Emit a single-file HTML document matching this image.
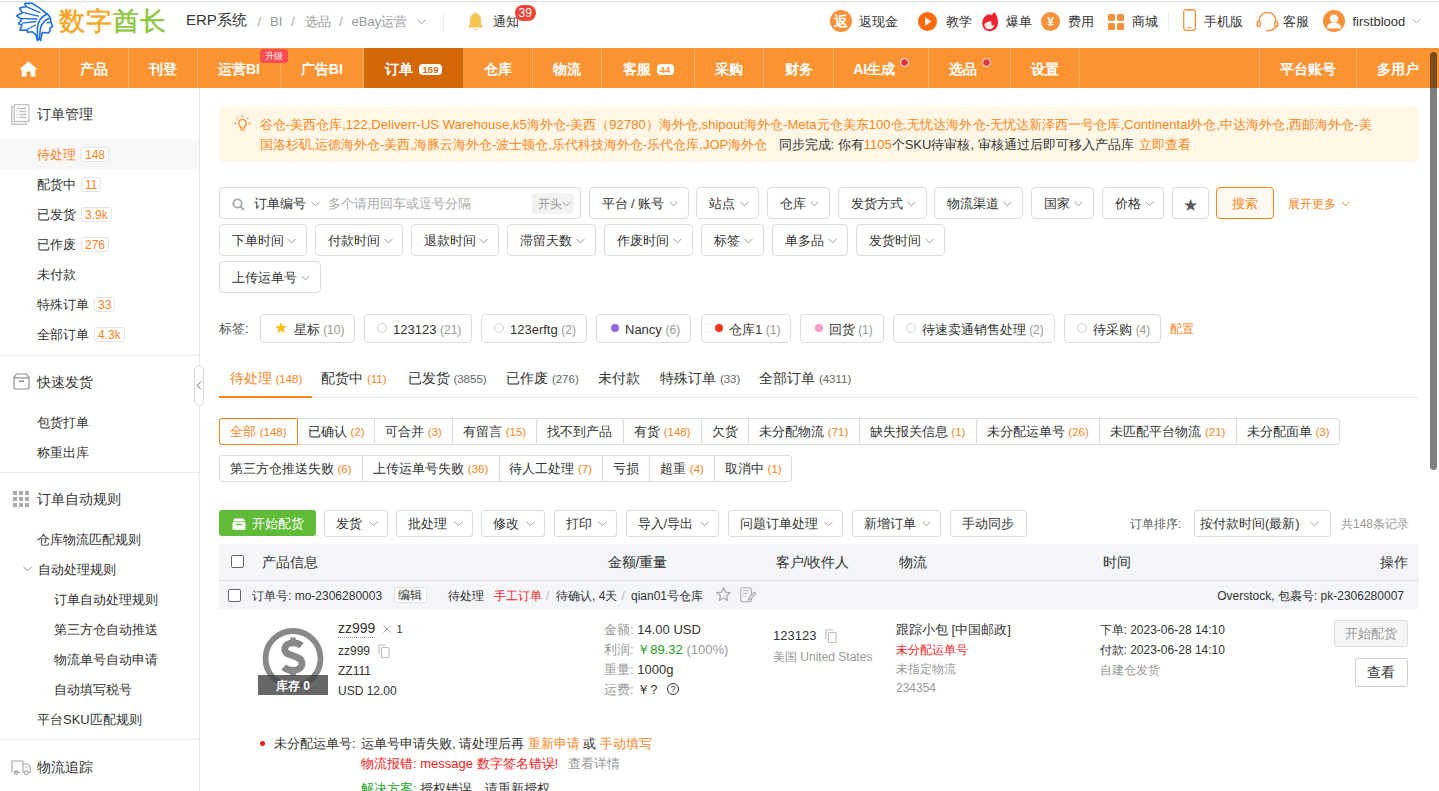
<!DOCTYPE html>
<html><head><meta charset="utf-8"><title>订单</title>
<style>
*{box-sizing:border-box;margin:0;padding:0}
html,body{width:1439px;height:791px;overflow:hidden;background:#fff;font-family:"Liberation Sans",sans-serif;color:#333;font-size:13px}
.a{position:absolute;white-space:nowrap;line-height:20px}
.btn{position:absolute;border:1px solid #dcdcdc;border-radius:4px;background:#fff}
</style></head><body>

<div class="a" style="left:0px;top:0px;width:1439px;height:48px;background:#fff"></div>
<div class="a" style="left:0px;top:1px;width:1439px;height:1px;background:#dcdcdc"></div>
<svg class="a" style="left:12px;top:0px" width="46" height="44" viewBox="12 0 46 44">
<g fill="none" stroke="#1f6fd8" stroke-width="1.6" stroke-linejoin="round" stroke-linecap="round">
<path d="M24.8,3.4 L32.4,3.4 L40,8.4 L47.2,14 Q50.5,16 51,22.3 L52.5,26.5 L49.9,28.4 L50.3,30.3 L48.4,33 L42.3,32.5 L41.2,36.8 L40.8,40.5 L38.9,38.6 L37.4,40.5 L36.2,35.2 L32.4,31.8 L27.6,32.2 L27,30 L20,30.3 L22,25 L18.5,23.7 L21.8,19.2 L16.5,15.9 L22.3,12.8 L19.6,8.1 L26,6.4 Z"/>
<path d="M26.2,6.7 L40,12.6 M23.2,12.6 L38.5,16.2 M22,18.7 L37,19 M22.3,23.1 L35.7,21.5 M27,29.5 L35.5,25" stroke-width="1.3"/>
<path d="M47.2,14 Q38,18 37.4,28 L37.4,40 M48.8,18.6 Q40.5,22 40,32 L39.5,38 M47.2,22.7 L51,22.3"/>
</g></svg>
<div class="a" style="left:59px;top:4px;font-size:26px;line-height:34px;font-weight:normal;letter-spacing:1px;-webkit-text-stroke:0.5px currentColor"><span style="color:#f5a623">数字</span><span style="color:#8dc63f">酋长</span></div>
<div class="a" style="left:186px;top:10.0px;font-size:15px;color:#333;">ERP系统</div>
<div class="a" style="left:257.5px;top:12.0px;font-size:13px;color:#aaa;">/</div>
<div class="a" style="left:270px;top:12.0px;font-size:13px;color:#999;">BI</div>
<div class="a" style="left:291px;top:12.0px;font-size:13px;color:#aaa;">/</div>
<div class="a" style="left:304.5px;top:12.0px;font-size:13px;color:#999;">选品</div>
<div class="a" style="left:339px;top:12.0px;font-size:13px;color:#aaa;">/</div>
<div class="a" style="left:351.5px;top:12.0px;font-size:13px;color:#999;">eBay运营</div>
<div class="a" style="left:416.5px;top:18.5px;width:9px;height:6px;line-height:0"><svg width="9" height="6" viewBox="0 0 9 6"><path d="M0.5 0.8 L4.5 4.8 L8.5 0.8" fill="none" stroke="#999" stroke-width="1"/></svg></div>
<div class="a" style="left:443px;top:11px;width:1px;height:21px;background:#eee"></div>
<svg class="a" style="left:466px;top:12px" width="19" height="20" viewBox="0 0 19 20">
<path d="M9.5 1.5 C5.5 1.5 4 4.8 4 8 L4 12 L2 15.5 L17 15.5 L15 12 L15 8 C15 4.8 13.5 1.5 9.5 1.5 Z" fill="#f7c452"/>
<circle cx="9.5" cy="1.8" r="1.3" fill="#f7c452"/><path d="M7.5 17 Q9.5 19.5 11.5 17 Z" fill="#f7c452"/></svg>
<div class="a" style="left:492.5px;top:12.3px;font-size:13px;color:#333;">通知</div>
<div class="a" style="left:514.5px;top:4.5px;width:21.5px;height:16.0px;background:#ef4136;border-radius:8px"></div>
<div class="a" style="left:514.5px;top:4.5px;width:21.5px;height:16px;line-height:16px;font-size:12px;color:#fff;text-align:center">39</div>
<div class="a" style="left:830px;top:10px;width:22px;height:22px;border-radius:50%;background:#f8923a;color:#fff;font-size:14px;line-height:22px;text-align:center;font-weight:bold">返</div>
<div class="a" style="left:859px;top:11.5px;font-size:13px;color:#333;">返现金</div>
<svg class="a" style="left:918px;top:11.5px" width="19" height="19" viewBox="0 0 19 19"><circle cx="9.5" cy="9.5" r="9.5" fill="#fa6b0e"/><path d="M7.2 5.3 L13.2 9.5 L7.2 13.7 Z" fill="#fff"/></svg>
<div class="a" style="left:945.5px;top:11.5px;font-size:13px;color:#333;">教学</div>
<svg class="a" style="left:981px;top:11px" width="18" height="21" viewBox="0 0 18 21">
<path d="M13.4 0.9 C15.5 3 17 7 17 11.5 C17 16.5 13.5 20.2 9 20.2 C4.5 20.2 1.2 16.8 1.2 12.5 C1.2 8 4 4 9 3 L9.8 4.5 L11.4 3.2 Z" fill="#f2222e"/>
<path d="M3.4 13.2 C4.3 11.8 6 11 10.2 10 C10.2 11.5 10.4 13 10.8 14.2 L13.4 14.2 C12.8 16.5 11 18.2 8 18.2 C5.5 18.2 3.6 16.5 3.4 13.2 Z" fill="#fdeeee"/></svg>
<div class="a" style="left:1005.5px;top:11.5px;font-size:13px;color:#333;">爆单</div>
<div class="a" style="left:1041px;top:11.5px;width:19px;height:19px;border-radius:50%;background:#f8923a;color:#fff;font-size:12px;line-height:21px;text-align:center;font-weight:bold">¥</div>
<div class="a" style="left:1068px;top:11.5px;font-size:13px;color:#333;">费用</div>
<svg class="a" style="left:1108px;top:14px" width="16" height="16" viewBox="0 0 16 16" fill="#f8923a"><rect x="0" y="0" width="7" height="7" rx="1.5"/><rect x="9" y="0" width="7" height="7" rx="1.5"/><rect x="0" y="9" width="7" height="7" rx="1.5"/><rect x="9" y="9" width="7" height="7" rx="1.5"/></svg>
<div class="a" style="left:1132px;top:11.5px;font-size:13px;color:#333;">商城</div>
<div class="a" style="left:1168px;top:11px;width:1px;height:21px;background:#eee"></div>
<svg class="a" style="left:1183px;top:9px" width="13" height="22" viewBox="0 0 13 22"><rect x="0.7" y="0.7" width="11.6" height="20.6" rx="2.2" fill="none" stroke="#f8913a" stroke-width="1.3"/><path d="M4.5 18.6 L8.5 18.6" stroke="#f8913a" stroke-width="1"/><path d="M4.5 1.2 L8.5 1.2" stroke="#f8913a" stroke-width="1"/></svg>
<div class="a" style="left:1204px;top:11.5px;font-size:13px;color:#333;">手机版</div>
<svg class="a" style="left:1256px;top:11px" width="23" height="21" viewBox="0 0 23 21" fill="none" stroke="#f8913a" stroke-width="1.4">
<path d="M3.2 11 L3.2 9.5 C3.2 4.8 6.9 1.4 11.5 1.4 C16.1 1.4 19.8 4.8 19.8 9.5 L19.8 11"/>
<rect x="1.2" y="10.5" width="3" height="5" rx="1.5"/><rect x="18.8" y="10.5" width="3" height="5" rx="1.5"/>
<path d="M19.8 15.5 C19.3 17.8 16.5 19.2 12.5 19.6"/><circle cx="11.5" cy="19.6" r="1.2" fill="#f8913a" stroke="none"/></svg>
<div class="a" style="left:1282.5px;top:11.5px;font-size:13px;color:#333;">客服</div>
<svg class="a" style="left:1323px;top:10px" width="22" height="22" viewBox="0 0 22 22"><circle cx="11" cy="11" r="11" fill="#f8913a"/>
<circle cx="11" cy="8.6" r="4.2" fill="#fff"/><path d="M3.8 17.2 C4.5 14.2 7.5 12.8 11 12.8 C14.5 12.8 17.5 14.2 18.2 17.2 C18.2 18 17.5 18.4 16.8 18.4 L5.2 18.4 C4.5 18.4 3.8 18 3.8 17.2 Z" fill="#fff"/></svg>
<div class="a" style="left:1352.5px;top:11.5px;font-size:13px;color:#333;">firstblood</div>
<div class="a" style="left:1411.5px;top:18px;width:9px;height:6px;line-height:0"><svg width="9" height="6" viewBox="0 0 9 6"><path d="M0.5 0.8 L4.5 4.8 L8.5 0.8" fill="none" stroke="#aaa" stroke-width="1"/></svg></div>
<div class="a" style="left:0px;top:48px;width:1439px;height:40px;background:#fa9433"></div>
<div class="a" style="left:363.5px;top:48px;width:100.0px;height:40px;background:#d3680b"></div>
<div class="a" style="left:59px;top:48px;width:1px;height:40px;background:rgba(255,255,255,0.28)"></div>
<div class="a" style="left:128px;top:48px;width:1px;height:40px;background:rgba(255,255,255,0.28)"></div>
<div class="a" style="left:197px;top:48px;width:1px;height:40px;background:rgba(255,255,255,0.28)"></div>
<div class="a" style="left:280px;top:48px;width:1px;height:40px;background:rgba(255,255,255,0.28)"></div>
<div class="a" style="left:363px;top:48px;width:1px;height:40px;background:rgba(255,255,255,0.28)"></div>
<div class="a" style="left:463px;top:48px;width:1px;height:40px;background:rgba(255,255,255,0.28)"></div>
<div class="a" style="left:532px;top:48px;width:1px;height:40px;background:rgba(255,255,255,0.28)"></div>
<div class="a" style="left:601px;top:48px;width:1px;height:40px;background:rgba(255,255,255,0.28)"></div>
<div class="a" style="left:694px;top:48px;width:1px;height:40px;background:rgba(255,255,255,0.28)"></div>
<div class="a" style="left:763px;top:48px;width:1px;height:40px;background:rgba(255,255,255,0.28)"></div>
<div class="a" style="left:833px;top:48px;width:1px;height:40px;background:rgba(255,255,255,0.28)"></div>
<div class="a" style="left:928px;top:48px;width:1px;height:40px;background:rgba(255,255,255,0.28)"></div>
<div class="a" style="left:1010px;top:48px;width:1px;height:40px;background:rgba(255,255,255,0.28)"></div>
<div class="a" style="left:1079px;top:48px;width:1px;height:40px;background:rgba(255,255,255,0.28)"></div>
<div class="a" style="left:1259px;top:48px;width:1px;height:40px;background:rgba(255,255,255,0.28)"></div>
<div class="a" style="left:1356px;top:48px;width:1px;height:40px;background:rgba(255,255,255,0.28)"></div>
<svg class="a" style="left:19px;top:61px" width="19" height="16" viewBox="0 0 19 16"><path d="M9.5 0.5 L18.5 8.2 L16.3 8.2 L16.3 15.5 L11.5 15.5 L11.5 10.5 L7.5 10.5 L7.5 15.5 L2.7 15.5 L2.7 8.2 L0.5 8.2 Z" fill="#fff"/></svg>
<div class="a" style="left:59.5px;top:59px;width:68.80000000000001px;text-align:center;font-size:14px;font-weight:bold;color:#fff;line-height:20px">产品</div>
<div class="a" style="left:128.3px;top:59px;width:69.39999999999998px;text-align:center;font-size:14px;font-weight:bold;color:#fff;line-height:20px">刊登</div>
<div class="a" style="left:197.7px;top:59px;width:82.5px;text-align:center;font-size:14px;font-weight:bold;color:#fff;line-height:20px">运营BI</div>
<div class="a" style="left:280.2px;top:59px;width:83.30000000000001px;text-align:center;font-size:14px;font-weight:bold;color:#fff;line-height:20px">广告BI</div>
<div class="a" style="left:363.5px;top:59px;width:100.0px;text-align:center;font-size:14px;font-weight:bold;color:#fff;line-height:20px">订单<span style="display:inline-block;margin-left:6px;width:23px;height:11px;border-radius:4px;background:#fff;color:#d3680b;font-size:9.5px;line-height:12px;vertical-align:1px">159</span></div>
<div class="a" style="left:463.5px;top:59px;width:68.79999999999995px;text-align:center;font-size:14px;font-weight:bold;color:#fff;line-height:20px">仓库</div>
<div class="a" style="left:532.3px;top:59px;width:69.0px;text-align:center;font-size:14px;font-weight:bold;color:#fff;line-height:20px">物流</div>
<div class="a" style="left:601.3px;top:59px;width:93.5px;text-align:center;font-size:14px;font-weight:bold;color:#fff;line-height:20px">客服<span style="display:inline-block;margin-left:6px;width:17px;height:11px;border-radius:4px;background:#fff;color:#fa9433;font-size:9.5px;line-height:12px;vertical-align:1px">44</span></div>
<div class="a" style="left:694.8px;top:59px;width:69.10000000000002px;text-align:center;font-size:14px;font-weight:bold;color:#fff;line-height:20px">采购</div>
<div class="a" style="left:763.9px;top:59px;width:69.30000000000007px;text-align:center;font-size:14px;font-weight:bold;color:#fff;line-height:20px">财务</div>
<div class="a" style="left:833.2px;top:59px;width:95.09999999999991px;text-align:center;font-size:14px;font-weight:bold;color:#fff;line-height:20px">AI生成<span style="display:inline-block;width:13px"></span></div>
<div class="a" style="left:928.3px;top:59px;width:82.0px;text-align:center;font-size:14px;font-weight:bold;color:#fff;line-height:20px">选品<span style="display:inline-block;width:13px"></span></div>
<div class="a" style="left:1010.3px;top:59px;width:69.40000000000009px;text-align:center;font-size:14px;font-weight:bold;color:#fff;line-height:20px">设置</div>
<div class="a" style="left:1259.5px;top:59px;width:96.5px;text-align:center;font-size:14px;font-weight:bold;color:#fff;line-height:20px">平台账号</div>
<div class="a" style="left:1356px;top:59px;width:83px;text-align:center;font-size:14px;font-weight:bold;color:#fff;line-height:20px">多用户</div>
<div class="a" style="left:260px;top:49px;width:28px;height:14px;border-radius:3px;background:#fd4b52;color:#fff;font-size:9px;line-height:14px;text-align:center">升级</div>
<div class="a" style="left:899.5px;top:58.3px;width:9px;height:9px;border-radius:50%;background:#e8323c;border:1.2px solid #fff"></div>
<div class="a" style="left:981.5px;top:58.3px;width:9px;height:9px;border-radius:50%;background:#e8323c;border:1.2px solid #fff"></div>
<div class="a" style="left:199px;top:88px;width:1px;height:703px;background:#e6e6e6"></div>
<svg class="a" style="left:11px;top:104px" width="19" height="21" viewBox="0 0 19 21" fill="none" stroke="#c2c2c2" stroke-width="1.2">
<rect x="0.6" y="2.6" width="14.3" height="17.8" fill="#f1f1f1"/><rect x="3.4" y="0.6" width="14.6" height="16.8" fill="#fff"/>
<path d="M6.2 4.5 L15.3 4.5" stroke-width="1.6"/><path d="M5.3 7.5 L6.3 7.5 M5.3 10.5 L6.3 10.5 M5.3 13.5 L6.3 13.5 M8.3 7.5 L15.3 7.5 M8.3 10.5 L15.3 10.5 M8.3 13.5 L15.3 13.5" stroke-width="1.3"/></svg>
<div class="a" style="left:37px;top:104px;font-size:14px;color:#333;">订单管理</div>
<div class="a" style="left:0px;top:139px;width:199px;height:30px;background:#f7f7f7"></div>
<div class="a" style="left:37px;top:144.5px;font-size:13px;color:#f7841f;">待处理</div>
<div class="a" style="left:81px;top:146.5px;height:15px;line-height:14px;padding:0 3px;border:1px solid #e4e4e4;border-radius:3px;font-size:12px;color:#f7841f;background:#fff">148</div>
<div class="a" style="left:37px;top:174.5px;font-size:13px;color:#333;">配货中</div>
<div class="a" style="left:81px;top:176.5px;height:15px;line-height:14px;padding:0 3px;border:1px solid #e4e4e4;border-radius:3px;font-size:12px;color:#f7841f;background:#fff">11</div>
<div class="a" style="left:37px;top:204.5px;font-size:13px;color:#333;">已发货</div>
<div class="a" style="left:81px;top:206.5px;height:15px;line-height:14px;padding:0 3px;border:1px solid #e4e4e4;border-radius:3px;font-size:12px;color:#f7841f;background:#fff">3.9k</div>
<div class="a" style="left:37px;top:234.5px;font-size:13px;color:#333;">已作废</div>
<div class="a" style="left:81px;top:236.5px;height:15px;line-height:14px;padding:0 3px;border:1px solid #e4e4e4;border-radius:3px;font-size:12px;color:#f7841f;background:#fff">276</div>
<div class="a" style="left:37px;top:264.5px;font-size:13px;color:#333;">未付款</div>
<div class="a" style="left:37px;top:294.5px;font-size:13px;color:#333;">特殊订单</div>
<div class="a" style="left:94px;top:296.5px;height:15px;line-height:14px;padding:0 3px;border:1px solid #e4e4e4;border-radius:3px;font-size:12px;color:#f7841f;background:#fff">33</div>
<div class="a" style="left:37px;top:324.5px;font-size:13px;color:#333;">全部订单</div>
<div class="a" style="left:94px;top:326.5px;height:15px;line-height:14px;padding:0 3px;border:1px solid #e4e4e4;border-radius:3px;font-size:12px;color:#f7841f;background:#fff">4.3k</div>
<div class="a" style="left:0px;top:355px;width:199px;height:1px;background:#ececec"></div>
<svg class="a" style="left:12.5px;top:373px" width="17" height="17" viewBox="0 0 17 17" fill="none" stroke="#8f8f8f" stroke-width="1.2">
<path d="M1 4.8 L1 14.6 Q1 16 2.4 16 L14.6 16 Q16 16 16 14.6 L16 4.8 Z"/><path d="M1 4.8 L3.4 1 L13.6 1 L16 4.8"/><path d="M6 8.2 L11 8.2" stroke-width="1.6"/></svg>
<div class="a" style="left:37px;top:372px;font-size:14px;color:#333;">快速发货</div>
<div class="a" style="left:37px;top:412.5px;font-size:13px;color:#333;">包货打单</div>
<div class="a" style="left:37px;top:442.5px;font-size:13px;color:#333;">称重出库</div>
<div class="a" style="left:194px;top:365px;width:10px;height:41px;border:1px solid #d8d8d8;border-radius:5px;background:#fff"></div>
<svg class="a" style="left:195.5px;top:381px" width="6" height="9" viewBox="0 0 6 9"><path d="M4.8 0.8 L1.2 4.5 L4.8 8.2" fill="none" stroke="#666" stroke-width="1"/></svg>
<div class="a" style="left:0px;top:472px;width:199px;height:1px;background:#ececec"></div>
<svg class="a" style="left:11px;top:489px" width="20" height="20" viewBox="0 0 20 20" fill="#acacac">
<rect x="0" y="0" width="20" height="20" fill="#fafafa"/>
<rect x="2" y="2" width="4" height="4"/><rect x="8" y="2" width="4" height="4"/><rect x="14" y="2" width="4" height="4"/>
<rect x="2" y="8" width="4" height="4"/><rect x="8" y="8" width="4" height="4"/><rect x="14" y="8" width="4" height="4"/>
<rect x="2" y="14" width="4" height="4"/><rect x="8" y="14" width="4" height="4"/><rect x="14" y="14" width="4" height="4"/></svg>
<div class="a" style="left:37px;top:489px;font-size:14px;color:#333;">订单自动规则</div>
<div class="a" style="left:37px;top:529.5px;font-size:13px;color:#333;">仓库物流匹配规则</div>
<svg class="a" style="left:22.5px;top:566px" width="9" height="6" viewBox="0 0 9 6"><path d="M0.5 0.8 L4.5 4.8 L8.5 0.8" fill="none" stroke="#888" stroke-width="1"/></svg>
<div class="a" style="left:38px;top:559.5px;font-size:13px;color:#333;">自动处理规则</div>
<div class="a" style="left:53.5px;top:589.5px;font-size:13px;color:#333;">订单自动处理规则</div>
<div class="a" style="left:53.5px;top:619.5px;font-size:13px;color:#333;">第三方仓自动推送</div>
<div class="a" style="left:53.5px;top:649.5px;font-size:13px;color:#333;">物流单号自动申请</div>
<div class="a" style="left:53.5px;top:679.5px;font-size:13px;color:#333;">自动填写税号</div>
<div class="a" style="left:37px;top:709.5px;font-size:13px;color:#333;">平台SKU匹配规则</div>
<div class="a" style="left:0px;top:739px;width:199px;height:1px;background:#ececec"></div>
<svg class="a" style="left:10.5px;top:759.5px" width="20" height="16" viewBox="0 0 20 16" fill="none" stroke="#a5a5a5" stroke-width="1.1">
<path d="M1 12.5 L1 1.5 Q1 1 1.5 1 L11.5 1 Q12 1 12 1.5 L12 12.5 M3 12.5 L9 12.5 M12 4 L16 4 Q17 4 18 5.5 L19.2 7.5 L19.2 12.5 L17.5 12.5 M12 12.5 L13.5 12.5"/>
<circle cx="5.2" cy="12.8" r="1.9"/><circle cx="15.3" cy="12.8" r="1.9"/><path d="M14 6 L16 6 L17 7.8 L14.5 7.8 Z" fill="#c8c8c8" stroke="none"/></svg>
<div class="a" style="left:37px;top:757px;font-size:14px;color:#333;">物流追踪</div>
<div class="a" style="left:219px;top:106px;width:1200px;height:56px;background:#fff7e6;border-radius:5px"></div>
<svg class="a" style="left:233.5px;top:114.5px" width="17" height="17" viewBox="0 0 17 17" fill="none" stroke="#f7861c" stroke-width="1.2">
<path d="M8.5 4.5 C6.2 4.5 4.7 6.2 4.7 8.2 C4.7 9.8 5.6 10.6 6.3 11.4 L6.3 13 L10.7 13 L10.7 11.4 C11.4 10.6 12.3 9.8 12.3 8.2 C12.3 6.2 10.8 4.5 8.5 4.5 Z"/>
<path d="M6.5 14.8 L10.5 14.8 M8.5 0.5 L8.5 2.3 M2.6 2.8 L3.8 4 M14.4 2.8 L13.2 4 M0.5 8.3 L2.3 8.3 M14.7 8.3 L16.5 8.3"/></svg>
<div class="a" style="left:259.5px;top:114.5px;font-size:13px;color:#f7861c;letter-spacing:0.05px;">谷仓-美西仓库,122,Deliverr-US Warehouse,k5海外仓-美西（92780）海外仓,shipout海外仓-Meta元仓美东100仓,无忧达海外仓-无忧达新泽西一号仓库,Continental外仓,中达海外仓,西邮海外仓-美</div>
<div class="a" style="left:259.5px;top:134.5px;font-size:13px;color:#f7861c;">国洛杉矶,运德海外仓-美西,海豚云海外仓-波士顿仓,乐代科技海外仓-乐代仓库,JOP海外仓</div>
<div class="a" style="left:778.5px;top:134.5px;font-size:13px;color:#333;">同步完成: 你有<span style="color:#f7861c">1105</span>个SKU待审核, 审核通过后即可移入产品库</div>
<div class="a" style="left:1138.5px;top:134.5px;font-size:13px;color:#f7861c;">立即查看</div>
<div class="btn" style="left:219px;top:187px;width:361.5px;height:32px"></div>
<svg class="a" style="left:231.5px;top:197.5px" width="13" height="13" viewBox="0 0 13 13" fill="none" stroke="#a6a6a6" stroke-width="1.8"><circle cx="5.5" cy="5.5" r="4.2"/><path d="M8.6 8.6 L12 12"/></svg>
<div class="a" style="left:254px;top:193.5px;font-size:13px;color:#333;">订单编号</div>
<div class="a" style="left:311px;top:200.5px;width:9px;height:6px;line-height:0"><svg width="9" height="6" viewBox="0 0 9 6"><path d="M0.5 0.8 L4.5 4.8 L8.5 0.8" fill="none" stroke="#999" stroke-width="1"/></svg></div>
<div class="a" style="left:328px;top:193.5px;font-size:13px;color:#aaa;">多个请用回车或逗号分隔</div>
<div class="a" style="left:532px;top:193px;width:42px;height:21px;background:#f2f2f2;border-radius:4px"></div>
<div class="a" style="left:537.5px;top:194.0px;font-size:12px;color:#999;">开头</div>
<div class="a" style="left:562px;top:200.5px;width:9px;height:6px;line-height:0"><svg width="9" height="6" viewBox="0 0 9 6"><path d="M0.5 0.8 L4.5 4.8 L8.5 0.8" fill="none" stroke="#999" stroke-width="1"/></svg></div>
<div class="btn" style="left:588.5px;top:187px;width:100.20000000000005px;height:32px"></div>
<div class="a" style="left:601.5px;top:193.5px;font-size:13px;color:#333;">平台 / 账号</div>
<div class="a" style="left:668.7px;top:200.5px;width:9px;height:6px;line-height:0"><svg width="9" height="6" viewBox="0 0 9 6"><path d="M0.5 0.8 L4.5 4.8 L8.5 0.8" fill="none" stroke="#999" stroke-width="1"/></svg></div>
<div class="btn" style="left:696.4px;top:187px;width:63.10000000000002px;height:32px"></div>
<div class="a" style="left:709.4px;top:193.5px;font-size:13px;color:#333;">站点</div>
<div class="a" style="left:739.5px;top:200.5px;width:9px;height:6px;line-height:0"><svg width="9" height="6" viewBox="0 0 9 6"><path d="M0.5 0.8 L4.5 4.8 L8.5 0.8" fill="none" stroke="#999" stroke-width="1"/></svg></div>
<div class="btn" style="left:767.3px;top:187px;width:63.0px;height:32px"></div>
<div class="a" style="left:780.3px;top:193.5px;font-size:13px;color:#333;">仓库</div>
<div class="a" style="left:810.3px;top:200.5px;width:9px;height:6px;line-height:0"><svg width="9" height="6" viewBox="0 0 9 6"><path d="M0.5 0.8 L4.5 4.8 L8.5 0.8" fill="none" stroke="#999" stroke-width="1"/></svg></div>
<div class="btn" style="left:837.5px;top:187px;width:89.29999999999995px;height:32px"></div>
<div class="a" style="left:850.5px;top:193.5px;font-size:13px;color:#333;">发货方式</div>
<div class="a" style="left:906.8px;top:200.5px;width:9px;height:6px;line-height:0"><svg width="9" height="6" viewBox="0 0 9 6"><path d="M0.5 0.8 L4.5 4.8 L8.5 0.8" fill="none" stroke="#999" stroke-width="1"/></svg></div>
<div class="btn" style="left:934.3px;top:187px;width:89.0px;height:32px"></div>
<div class="a" style="left:947.3px;top:193.5px;font-size:13px;color:#333;">物流渠道</div>
<div class="a" style="left:1003.3px;top:200.5px;width:9px;height:6px;line-height:0"><svg width="9" height="6" viewBox="0 0 9 6"><path d="M0.5 0.8 L4.5 4.8 L8.5 0.8" fill="none" stroke="#999" stroke-width="1"/></svg></div>
<div class="btn" style="left:1030.6px;top:187px;width:63.40000000000009px;height:32px"></div>
<div class="a" style="left:1043.6px;top:193.5px;font-size:13px;color:#333;">国家</div>
<div class="a" style="left:1074px;top:200.5px;width:9px;height:6px;line-height:0"><svg width="9" height="6" viewBox="0 0 9 6"><path d="M0.5 0.8 L4.5 4.8 L8.5 0.8" fill="none" stroke="#999" stroke-width="1"/></svg></div>
<div class="btn" style="left:1101.6px;top:187px;width:62.90000000000009px;height:32px"></div>
<div class="a" style="left:1114.6px;top:193.5px;font-size:13px;color:#333;">价格</div>
<div class="a" style="left:1144.5px;top:200.5px;width:9px;height:6px;line-height:0"><svg width="9" height="6" viewBox="0 0 9 6"><path d="M0.5 0.8 L4.5 4.8 L8.5 0.8" fill="none" stroke="#999" stroke-width="1"/></svg></div>
<div class="btn" style="left:1172px;top:187px;width:36.5px;height:32px"></div>
<div class="a" style="left:1172px;top:194.5px;width:36.5px;text-align:center;font-size:17px;color:#5a5a5a;line-height:22px">★</div>
<div class="btn" style="left:1216px;top:187px;width:57.5px;height:32px;border-color:#f7861c;background:#fff9f2"></div>
<div class="a" style="left:1232px;top:193.5px;font-size:13px;color:#f7861c;">搜索</div>
<div class="a" style="left:1288px;top:193.5px;font-size:12px;color:#f7861c;">展开更多</div>
<div class="a" style="left:1340.5px;top:200.5px;width:9px;height:6px;line-height:0"><svg width="9" height="6" viewBox="0 0 9 6"><path d="M0.5 0.8 L4.5 4.8 L8.5 0.8" fill="none" stroke="#f7861c" stroke-width="1"/></svg></div>
<div class="btn" style="left:218.5px;top:224px;width:88.80000000000001px;height:32px"></div>
<div class="a" style="left:231.5px;top:230.5px;font-size:13px;color:#333;">下单时间</div>
<div class="a" style="left:287.3px;top:237.5px;width:9px;height:6px;line-height:0"><svg width="9" height="6" viewBox="0 0 9 6"><path d="M0.5 0.8 L4.5 4.8 L8.5 0.8" fill="none" stroke="#999" stroke-width="1"/></svg></div>
<div class="btn" style="left:314.8px;top:224px;width:88.69999999999999px;height:32px"></div>
<div class="a" style="left:327.8px;top:230.5px;font-size:13px;color:#333;">付款时间</div>
<div class="a" style="left:383.5px;top:237.5px;width:9px;height:6px;line-height:0"><svg width="9" height="6" viewBox="0 0 9 6"><path d="M0.5 0.8 L4.5 4.8 L8.5 0.8" fill="none" stroke="#999" stroke-width="1"/></svg></div>
<div class="btn" style="left:411px;top:224px;width:88.19999999999999px;height:32px"></div>
<div class="a" style="left:424px;top:230.5px;font-size:13px;color:#333;">退款时间</div>
<div class="a" style="left:479.2px;top:237.5px;width:9px;height:6px;line-height:0"><svg width="9" height="6" viewBox="0 0 9 6"><path d="M0.5 0.8 L4.5 4.8 L8.5 0.8" fill="none" stroke="#999" stroke-width="1"/></svg></div>
<div class="btn" style="left:507px;top:224px;width:89px;height:32px"></div>
<div class="a" style="left:520px;top:230.5px;font-size:13px;color:#333;">滞留天数</div>
<div class="a" style="left:576px;top:237.5px;width:9px;height:6px;line-height:0"><svg width="9" height="6" viewBox="0 0 9 6"><path d="M0.5 0.8 L4.5 4.8 L8.5 0.8" fill="none" stroke="#999" stroke-width="1"/></svg></div>
<div class="btn" style="left:604px;top:224px;width:89px;height:32px"></div>
<div class="a" style="left:617px;top:230.5px;font-size:13px;color:#333;">作废时间</div>
<div class="a" style="left:673px;top:237.5px;width:9px;height:6px;line-height:0"><svg width="9" height="6" viewBox="0 0 9 6"><path d="M0.5 0.8 L4.5 4.8 L8.5 0.8" fill="none" stroke="#999" stroke-width="1"/></svg></div>
<div class="btn" style="left:701px;top:224px;width:63px;height:32px"></div>
<div class="a" style="left:714px;top:230.5px;font-size:13px;color:#333;">标签</div>
<div class="a" style="left:744px;top:237.5px;width:9px;height:6px;line-height:0"><svg width="9" height="6" viewBox="0 0 9 6"><path d="M0.5 0.8 L4.5 4.8 L8.5 0.8" fill="none" stroke="#999" stroke-width="1"/></svg></div>
<div class="btn" style="left:771.9px;top:224px;width:76.30000000000007px;height:32px"></div>
<div class="a" style="left:784.9px;top:230.5px;font-size:13px;color:#333;">单多品</div>
<div class="a" style="left:828.2px;top:237.5px;width:9px;height:6px;line-height:0"><svg width="9" height="6" viewBox="0 0 9 6"><path d="M0.5 0.8 L4.5 4.8 L8.5 0.8" fill="none" stroke="#999" stroke-width="1"/></svg></div>
<div class="btn" style="left:855.9px;top:224px;width:88.80000000000007px;height:32px"></div>
<div class="a" style="left:868.9px;top:230.5px;font-size:13px;color:#333;">发货时间</div>
<div class="a" style="left:924.7px;top:237.5px;width:9px;height:6px;line-height:0"><svg width="9" height="6" viewBox="0 0 9 6"><path d="M0.5 0.8 L4.5 4.8 L8.5 0.8" fill="none" stroke="#999" stroke-width="1"/></svg></div>
<div class="btn" style="left:218.5px;top:261px;width:102.0px;height:32px"></div>
<div class="a" style="left:231.5px;top:267.5px;font-size:13px;color:#333;">上传运单号</div>
<div class="a" style="left:300.5px;top:274.5px;width:9px;height:6px;line-height:0"><svg width="9" height="6" viewBox="0 0 9 6"><path d="M0.5 0.8 L4.5 4.8 L8.5 0.8" fill="none" stroke="#999" stroke-width="1"/></svg></div>
<div class="a" style="left:219px;top:318.5px;font-size:13px;color:#555;">标签:</div>
<div class="btn" style="left:260.4px;top:313.5px;width:94.70000000000005px;height:29px"></div>
<svg class="a" style="left:275px;top:322px" width="12" height="12" viewBox="0 0 12 12"><path d="M6 0.3 L7.7 4 L11.7 4.3 L8.7 7 L9.6 11 L6 8.9 L2.4 11 L3.3 7 L0.3 4.3 L4.3 4 Z" fill="#fcbf12"/></svg>
<div class="a" style="left:293.5px;top:319.5px;font-size:13px;color:#333">星标 <span style="font-size:12px;color:#999">(10)</span></div>
<div class="btn" style="left:363.8px;top:313.5px;width:108.19999999999999px;height:29px"></div>
<div class="a" style="left:377px;top:323px;width:10px;height:10px;border-radius:50%;border:1px solid #cfcfcf"></div>
<div class="a" style="left:393px;top:319.5px;font-size:13px;color:#333">123123 <span style="font-size:12px;color:#999">(21)</span></div>
<div class="btn" style="left:481px;top:313.5px;width:106px;height:29px"></div>
<div class="a" style="left:494px;top:323px;width:10px;height:10px;border-radius:50%;border:1px solid #cfcfcf"></div>
<div class="a" style="left:510px;top:319.5px;font-size:13px;color:#333">123erftg <span style="font-size:12px;color:#999">(2)</span></div>
<div class="btn" style="left:596.2px;top:313.5px;width:95.19999999999993px;height:29px"></div>
<div class="a" style="left:611px;top:323.5px;width:8px;height:8px;border-radius:50%;background:#8e6bd8"></div>
<div class="a" style="left:625px;top:319.5px;font-size:13px;color:#333">Nancy <span style="font-size:12px;color:#999">(6)</span></div>
<div class="btn" style="left:700.6px;top:313.5px;width:90.79999999999995px;height:29px"></div>
<div class="a" style="left:715px;top:323.5px;width:8px;height:8px;border-radius:50%;background:#f0321e"></div>
<div class="a" style="left:729px;top:319.5px;font-size:13px;color:#333">仓库1 <span style="font-size:12px;color:#999">(1)</span></div>
<div class="btn" style="left:800.3px;top:313.5px;width:83.80000000000007px;height:29px"></div>
<div class="a" style="left:814.5px;top:323.5px;width:8px;height:8px;border-radius:50%;background:#f99bc4"></div>
<div class="a" style="left:828.5px;top:319.5px;font-size:13px;color:#333">回货 <span style="font-size:12px;color:#999">(1)</span></div>
<div class="btn" style="left:893.3px;top:313.5px;width:161.70000000000005px;height:29px"></div>
<div class="a" style="left:905.5px;top:323px;width:10px;height:10px;border-radius:50%;border:1px solid #cfcfcf"></div>
<div class="a" style="left:921.5px;top:319.5px;font-size:13px;color:#333">待速卖通销售处理 <span style="font-size:12px;color:#999">(2)</span></div>
<div class="btn" style="left:1064px;top:313.5px;width:97px;height:29px"></div>
<div class="a" style="left:1077px;top:323px;width:10px;height:10px;border-radius:50%;border:1px solid #cfcfcf"></div>
<div class="a" style="left:1093px;top:319.5px;font-size:13px;color:#333">待采购 <span style="font-size:12px;color:#999">(4)</span></div>
<div class="a" style="left:1170px;top:318.5px;font-size:12px;color:#f7861c;">配置</div>
<div class="a" style="left:219px;top:397px;width:1200px;height:1px;background:#e8e8e8"></div>
<div class="a" style="left:219px;top:395.5px;width:93px;height:2.5px;background:#f7861c"></div>
<div class="a" style="left:229.5px;top:368px;font-size:14px;color:#f7861c">待处理 <span style="font-size:11.5px;color:#f7861c">(148)</span></div>
<div class="a" style="left:321px;top:368px;font-size:14px;color:#333">配货中 <span style="font-size:11.5px;color:#f7861c">(11)</span></div>
<div class="a" style="left:407.5px;top:368px;font-size:14px;color:#333">已发货 <span style="font-size:11.5px;color:#666">(3855)</span></div>
<div class="a" style="left:506px;top:368px;font-size:14px;color:#333">已作废 <span style="font-size:11.5px;color:#666">(276)</span></div>
<div class="a" style="left:598px;top:368px;font-size:14px;color:#333">未付款 <span style="font-size:11.5px;color:#666"></span></div>
<div class="a" style="left:660px;top:368px;font-size:14px;color:#333">特殊订单 <span style="font-size:11.5px;color:#666">(33)</span></div>
<div class="a" style="left:759px;top:368px;font-size:14px;color:#333">全部订单 <span style="font-size:11.5px;color:#666">(4311)</span></div>
<div class="a" style="left:219px;top:418px;width:1121.3px;height:27px;border:1px solid #dcdcdc;border-radius:3px"></div>
<div class="a" style="left:297.1px;top:418px;width:1.0px;height:27px;background:#dcdcdc"></div>
<div class="a" style="left:374.2px;top:418px;width:1.0px;height:27px;background:#dcdcdc"></div>
<div class="a" style="left:452.0px;top:418px;width:1.0px;height:27px;background:#dcdcdc"></div>
<div class="a" style="left:536.2px;top:418px;width:1.0px;height:27px;background:#dcdcdc"></div>
<div class="a" style="left:622.7px;top:418px;width:1.0px;height:27px;background:#dcdcdc"></div>
<div class="a" style="left:701.0px;top:418px;width:1.0px;height:27px;background:#dcdcdc"></div>
<div class="a" style="left:747.9px;top:418px;width:1.0px;height:27px;background:#dcdcdc"></div>
<div class="a" style="left:858.6px;top:418px;width:1.0px;height:27px;background:#dcdcdc"></div>
<div class="a" style="left:975.5px;top:418px;width:1.0px;height:27px;background:#dcdcdc"></div>
<div class="a" style="left:1099.0px;top:418px;width:1.0px;height:27px;background:#dcdcdc"></div>
<div class="a" style="left:1235.7px;top:418px;width:1.0px;height:27px;background:#dcdcdc"></div>
<div class="a" style="left:219px;top:418px;width:78.60000000000002px;height:27px;border:1px solid #f7861c;border-radius:3px 0 0 3px"></div>
<div class="a" style="left:219px;top:421.5px;width:78.60000000000002px;text-align:center;font-size:13px;color:#f7861c">全部 <span style="font-size:11.5px;color:#f7861c">(148)</span></div>
<div class="a" style="left:297.6px;top:421.5px;width:77.09999999999997px;text-align:center;font-size:13px;color:#333">已确认 <span style="font-size:11.5px;color:#f7861c">(2)</span></div>
<div class="a" style="left:374.7px;top:421.5px;width:77.80000000000001px;text-align:center;font-size:13px;color:#333">可合并 <span style="font-size:11.5px;color:#f7861c">(3)</span></div>
<div class="a" style="left:452.5px;top:421.5px;width:84.20000000000005px;text-align:center;font-size:13px;color:#333">有留言 <span style="font-size:11.5px;color:#f7861c">(15)</span></div>
<div class="a" style="left:536.7px;top:421.5px;width:86.5px;text-align:center;font-size:13px;color:#333">找不到产品</div>
<div class="a" style="left:623.2px;top:421.5px;width:78.29999999999995px;text-align:center;font-size:13px;color:#333">有货 <span style="font-size:11.5px;color:#f7861c">(148)</span></div>
<div class="a" style="left:701.5px;top:421.5px;width:46.89999999999998px;text-align:center;font-size:13px;color:#333">欠货</div>
<div class="a" style="left:748.4px;top:421.5px;width:110.70000000000005px;text-align:center;font-size:13px;color:#333">未分配物流 <span style="font-size:11.5px;color:#f7861c">(71)</span></div>
<div class="a" style="left:859.1px;top:421.5px;width:116.89999999999998px;text-align:center;font-size:13px;color:#333">缺失报关信息 <span style="font-size:11.5px;color:#f7861c">(1)</span></div>
<div class="a" style="left:976px;top:421.5px;width:123.5px;text-align:center;font-size:13px;color:#333">未分配运单号 <span style="font-size:11.5px;color:#f7861c">(26)</span></div>
<div class="a" style="left:1099.5px;top:421.5px;width:136.70000000000005px;text-align:center;font-size:13px;color:#333">未匹配平台物流 <span style="font-size:11.5px;color:#f7861c">(21)</span></div>
<div class="a" style="left:1236.2px;top:421.5px;width:104.09999999999991px;text-align:center;font-size:13px;color:#333">未分配面单 <span style="font-size:11.5px;color:#f7861c">(3)</span></div>
<div class="a" style="left:219px;top:455px;width:573.2px;height:27px;border:1px solid #dcdcdc;border-radius:3px"></div>
<div class="a" style="left:362.0px;top:455px;width:1.0px;height:27px;background:#dcdcdc"></div>
<div class="a" style="left:498.5px;top:455px;width:1.0px;height:27px;background:#dcdcdc"></div>
<div class="a" style="left:602.0px;top:455px;width:1.0px;height:27px;background:#dcdcdc"></div>
<div class="a" style="left:649.2px;top:455px;width:1.0px;height:27px;background:#dcdcdc"></div>
<div class="a" style="left:713.9px;top:455px;width:1.0px;height:27px;background:#dcdcdc"></div>
<div class="a" style="left:219px;top:458.5px;width:143.5px;text-align:center;font-size:13px;color:#333">第三方仓推送失败 <span style="font-size:11.5px;color:#f7861c">(6)</span></div>
<div class="a" style="left:362.5px;top:458.5px;width:136.5px;text-align:center;font-size:13px;color:#333">上传运单号失败 <span style="font-size:11.5px;color:#f7861c">(36)</span></div>
<div class="a" style="left:499px;top:458.5px;width:103.5px;text-align:center;font-size:13px;color:#333">待人工处理 <span style="font-size:11.5px;color:#f7861c">(7)</span></div>
<div class="a" style="left:602.5px;top:458.5px;width:47.200000000000045px;text-align:center;font-size:13px;color:#333">亏损</div>
<div class="a" style="left:649.7px;top:458.5px;width:64.69999999999993px;text-align:center;font-size:13px;color:#333">超重 <span style="font-size:11.5px;color:#f7861c">(4)</span></div>
<div class="a" style="left:714.4px;top:458.5px;width:77.80000000000007px;text-align:center;font-size:13px;color:#333">取消中 <span style="font-size:11.5px;color:#f7861c">(1)</span></div>
<div class="a" style="left:219px;top:510px;width:97px;height:26px;background:#60bb38;border-radius:3px"></div>
<svg class="a" style="left:232px;top:518px" width="14" height="12" viewBox="0 0 14 12"><path d="M0.5 4.3 L13.5 4.3 L13.5 10.8 Q13.5 11.8 12.5 11.8 L1.5 11.8 Q0.5 11.8 0.5 10.8 Z" fill="#fff"/><path d="M0.9 3.6 L2.6 0.5 L11.4 0.5 L13.1 3.6 Z" fill="#fff"/><path d="M4.6 6.6 L9.4 6.6" stroke="#60bb38" stroke-width="1.2" stroke-linecap="round"/></svg>
<div class="a" style="left:252px;top:513.5px;font-size:13px;color:#fff;">开始配货</div>
<div class="btn" style="left:324.3px;top:509.5px;width:63.30000000000001px;height:27px;border-radius:3px"></div>
<div class="a" style="left:336.3px;top:513.5px;font-size:13px;color:#333;">发货</div>
<div class="a" style="left:368.6px;top:520.5px;width:9px;height:6px;line-height:0"><svg width="9" height="6" viewBox="0 0 9 6"><path d="M0.5 0.8 L4.5 4.8 L8.5 0.8" fill="none" stroke="#999" stroke-width="1"/></svg></div>
<div class="btn" style="left:396.3px;top:509.5px;width:76.39999999999998px;height:27px;border-radius:3px"></div>
<div class="a" style="left:408.3px;top:513.5px;font-size:13px;color:#333;">批处理</div>
<div class="a" style="left:453.7px;top:520.5px;width:9px;height:6px;line-height:0"><svg width="9" height="6" viewBox="0 0 9 6"><path d="M0.5 0.8 L4.5 4.8 L8.5 0.8" fill="none" stroke="#999" stroke-width="1"/></svg></div>
<div class="btn" style="left:481.2px;top:509.5px;width:63.80000000000001px;height:27px;border-radius:3px"></div>
<div class="a" style="left:493.2px;top:513.5px;font-size:13px;color:#333;">修改</div>
<div class="a" style="left:526px;top:520.5px;width:9px;height:6px;line-height:0"><svg width="9" height="6" viewBox="0 0 9 6"><path d="M0.5 0.8 L4.5 4.8 L8.5 0.8" fill="none" stroke="#999" stroke-width="1"/></svg></div>
<div class="btn" style="left:553.5px;top:509.5px;width:63.10000000000002px;height:27px;border-radius:3px"></div>
<div class="a" style="left:565.5px;top:513.5px;font-size:13px;color:#333;">打印</div>
<div class="a" style="left:597.6px;top:520.5px;width:9px;height:6px;line-height:0"><svg width="9" height="6" viewBox="0 0 9 6"><path d="M0.5 0.8 L4.5 4.8 L8.5 0.8" fill="none" stroke="#999" stroke-width="1"/></svg></div>
<div class="btn" style="left:625.5px;top:509.5px;width:93.5px;height:27px;border-radius:3px"></div>
<div class="a" style="left:637.5px;top:513.5px;font-size:13px;color:#333;">导入/导出</div>
<div class="a" style="left:700px;top:520.5px;width:9px;height:6px;line-height:0"><svg width="9" height="6" viewBox="0 0 9 6"><path d="M0.5 0.8 L4.5 4.8 L8.5 0.8" fill="none" stroke="#999" stroke-width="1"/></svg></div>
<div class="btn" style="left:727.9px;top:509.5px;width:115.10000000000002px;height:27px;border-radius:3px"></div>
<div class="a" style="left:739.9px;top:513.5px;font-size:13px;color:#333;">问题订单处理</div>
<div class="a" style="left:824px;top:520.5px;width:9px;height:6px;line-height:0"><svg width="9" height="6" viewBox="0 0 9 6"><path d="M0.5 0.8 L4.5 4.8 L8.5 0.8" fill="none" stroke="#999" stroke-width="1"/></svg></div>
<div class="btn" style="left:851.6px;top:509.5px;width:89.29999999999995px;height:27px;border-radius:3px"></div>
<div class="a" style="left:863.6px;top:513.5px;font-size:13px;color:#333;">新增订单</div>
<div class="a" style="left:921.9px;top:520.5px;width:9px;height:6px;line-height:0"><svg width="9" height="6" viewBox="0 0 9 6"><path d="M0.5 0.8 L4.5 4.8 L8.5 0.8" fill="none" stroke="#999" stroke-width="1"/></svg></div>
<div class="btn" style="left:949.7px;top:509.5px;width:77.59999999999991px;height:27px;border-radius:3px"></div>
<div class="a" style="left:949.7px;top:514px;width:77.59999999999991px;text-align:center;font-size:13px;color:#333">手动同步</div>
<div class="a" style="left:1130px;top:513.5px;font-size:12px;color:#555;">订单排序:</div>
<div class="btn" style="left:1193.5px;top:509.5px;width:137px;height:27px;border-radius:3px"></div>
<div class="a" style="left:1200px;top:513.5px;font-size:13px;color:#333;">按付款时间(最新)</div>
<div class="a" style="left:1310px;top:520.5px;width:9px;height:6px;line-height:0"><svg width="9" height="6" viewBox="0 0 9 6"><path d="M0.5 0.8 L4.5 4.8 L8.5 0.8" fill="none" stroke="#aaa" stroke-width="1"/></svg></div>
<div class="a" style="left:1341px;top:513.5px;font-size:12px;color:#999;">共148条记录</div>
<div class="a" style="left:219px;top:544px;width:1199.5px;height:64.5px;background:#f4f5f9"></div>
<div class="a" style="left:219px;top:580px;width:1199.5px;height:1px;background:#e3e4e8"></div>
<div class="a" style="left:231px;top:555px;width:13px;height:13px;border:1px solid #666;border-radius:2px;background:#fff"></div>
<div class="a" style="left:261.5px;top:552px;font-size:14px;color:#333;">产品信息</div>
<div class="a" style="left:607.5px;top:552px;font-size:14px;color:#333;">金额/重量</div>
<div class="a" style="left:775.5px;top:552px;font-size:14px;color:#333;">客户/收件人</div>
<div class="a" style="left:899px;top:552px;font-size:14px;color:#333;">物流</div>
<div class="a" style="left:1102.5px;top:552px;font-size:14px;color:#333;">时间</div>
<div class="a" style="left:1380px;top:552px;font-size:14px;color:#333;">操作</div>
<div class="a" style="left:228px;top:589px;width:13px;height:13px;border:1px solid #666;border-radius:2px;background:#fff"></div>
<div class="a" style="left:252px;top:586.0px;font-size:12px;color:#333;">订单号: mo-2306280003</div>
<div class="a" style="left:393.5px;top:586.5px;width:33px;height:16px;border:1px solid #e2e2e2;border-radius:2px;background:#fff;font-size:12px;line-height:14px;text-align:center;color:#333">编辑</div>
<div class="a" style="left:447.5px;top:586.0px;font-size:12px;color:#333;">待处理</div>
<div class="a" style="left:494px;top:586.0px;font-size:12px;color:#f21c1c;">手工订单</div>
<div class="a" style="left:546px;top:586.0px;font-size:12px;color:#bbb;">/</div>
<div class="a" style="left:556px;top:586.0px;font-size:12px;color:#333;">待确认, 4天</div>
<div class="a" style="left:621.5px;top:586.0px;font-size:12px;color:#bbb;">/</div>
<div class="a" style="left:631px;top:586.0px;font-size:12px;color:#333;">qian01号仓库</div>
<svg class="a" style="left:715.5px;top:586.5px" width="15" height="15" viewBox="0 0 15 15"><path d="M7.5 0.9 L9.5 5.2 L14.2 5.6 L10.6 8.8 L11.7 13.6 L7.5 11.1 L3.3 13.6 L4.4 8.8 L0.8 5.6 L5.5 5.2 Z" fill="none" stroke="#a8a8a8" stroke-width="1.2" stroke-linejoin="round"/></svg>
<svg class="a" style="left:739.5px;top:586.5px" width="16" height="16" viewBox="0 0 16 16"><rect x="0.8" y="0.8" width="10.6" height="14" rx="1.8" fill="none" stroke="#ababab" stroke-width="1.1"/><path d="M3 3.6 L9 3.6 M3 6.4 L7.5 6.4 M3 9 L5.5 9" stroke="#b8b8b8" stroke-width="1"/><path d="M14.6 5.2 L8.9 11 L8.2 13.2 L10.4 12.4 L16 6.6 Z" fill="#f4f5f9" stroke="#ababab" stroke-width="1.1" stroke-linejoin="round"/></svg>
<div class="a" style="left:1000px;top:585.5px;width:404px;text-align:right;font-size:12px;color:#333">Overstock, 包裹号: pk-2306280007</div>
<svg class="a" style="left:258px;top:624px" width="70" height="71" viewBox="0 0 70 71">
<circle cx="35" cy="34.5" r="27.5" fill="none" stroke="#888" stroke-width="5.8"/>
<path d="M43.5 21.5 C41 19.5 38 18.8 35 18.8 C30 18.8 26.8 21.5 26.8 25.3 C26.8 33.5 44 30 44 39.5 C44 43.5 40 46.5 35 46.5 C31 46.5 27.8 45 25.8 43" fill="none" stroke="#888" stroke-width="6.8"/>
<path d="M35 13.5 L35 19 M35 46 L35 52" stroke="#888" stroke-width="5.5"/>
<rect x="0" y="51" width="70" height="20" fill="rgba(70,70,70,0.82)"/></svg>
<div class="a" style="left:258px;top:675.5px;width:70px;text-align:center;font-size:12px;color:#fff;font-weight:bold">库存 0</div>
<div class="a" style="left:338px;top:620px;font-size:14px;color:#333;border-bottom:1px dotted #999;line-height:16px;height:18px">zz999</div>
<svg class="a" style="left:382.5px;top:625px" width="8" height="8" viewBox="0 0 8 8"><path d="M0.5 0.5 L7.5 7.5 M7.5 0.5 L0.5 7.5" stroke="#999" stroke-width="0.9"/></svg>
<div class="a" style="left:396.5px;top:618.5px;font-size:11px;color:#333;">1</div>
<div class="a" style="left:338px;top:641.0px;font-size:12px;color:#333;">zz999</div>
<svg class="a" style="left:378px;top:644px" width="12" height="14" viewBox="0 0 12 14" fill="none" stroke="#bbb" stroke-width="1.1"><path d="M1 10 L1 1 L8 1"/><rect x="3.5" y="3.5" width="7.5" height="10" rx="1"/></svg>
<div class="a" style="left:338px;top:661.0px;font-size:12px;color:#333;">ZZ111</div>
<div class="a" style="left:338px;top:681.0px;font-size:12px;color:#333;">USD 12.00</div>
<div class="a" style="left:604px;top:619.5px;font-size:13px;color:#999;">金额: <span style="color:#333">14.00 USD</span></div>
<div class="a" style="left:604px;top:639.5px;font-size:13px;color:#999;">利润: <span style="color:#1ea11e">￥89.32</span> (100%)</div>
<div class="a" style="left:604px;top:659.5px;font-size:13px;color:#999;">重量: <span style="color:#333">1000g</span></div>
<div class="a" style="left:604px;top:679.5px;font-size:13px;color:#999;">运费: <span style="color:#333">￥?</span></div>
<div class="a" style="left:667px;top:683px;width:12px;height:12px;border:1px solid #333;border-radius:50%;font-size:9px;line-height:10px;text-align:center;color:#333">?</div>
<div class="a" style="left:773px;top:626.0px;font-size:13px;color:#333;">123123</div>
<svg class="a" style="left:825px;top:628.5px" width="12" height="14" viewBox="0 0 12 14" fill="none" stroke="#bbb" stroke-width="1.1"><path d="M1 10 L1 1 L8 1"/><rect x="3.5" y="3.5" width="7.5" height="10" rx="1"/></svg>
<div class="a" style="left:773px;top:647.0px;font-size:12px;color:#999;">美国 United States</div>
<div class="a" style="left:896px;top:619.5px;font-size:13px;color:#333;">跟踪小包 [中国邮政]</div>
<div class="a" style="left:896px;top:639.8px;font-size:12px;color:#f21c1c;">未分配运单号</div>
<div class="a" style="left:896px;top:659.3px;font-size:12px;color:#999;">未指定物流</div>
<div class="a" style="left:896px;top:678.3px;font-size:12px;color:#999;">234354</div>
<div class="a" style="left:1099.5px;top:620.0px;font-size:12px;color:#333;">下单: 2023-06-28 14:10</div>
<div class="a" style="left:1099.5px;top:639.8px;font-size:12px;color:#333;">付款: 2023-06-28 14:10</div>
<div class="a" style="left:1099.5px;top:660.0px;font-size:12px;color:#999;">自建仓发货</div>
<div class="a" style="left:1334px;top:619.5px;width:74px;height:27px;border:1px solid #dedede;border-radius:3px;background:#f5f5f5;text-align:center;font-size:13px;line-height:25px;color:#999">开始配货</div>
<div class="a" style="left:1354.5px;top:657.5px;width:53.5px;height:29px;border:1px solid #cfcfcf;border-radius:3px;background:#fff;text-align:center;font-size:14px;line-height:27px;color:#333">查看</div>
<div class="a" style="left:260px;top:740.5px;width:5px;height:5px;border-radius:50%;background:#f21c1c"></div>
<div class="a" style="left:274px;top:733.5px;font-size:13px;color:#333;">未分配运单号:</div>
<div class="a" style="left:361px;top:733.5px;font-size:13px;color:#333;">运单号申请失败, 请处理后再 <span style="color:#f7861c">重新申请</span> 或 <span style="color:#f7861c">手动填写</span></div>
<div class="a" style="left:361px;top:754.0px;font-size:13px;color:#f21c1c;">物流报错: message 数字签名错误!</div>
<div class="a" style="left:568px;top:754.0px;font-size:13px;color:#999;">查看详情</div>
<div class="a" style="left:361px;top:778.5px;font-size:13px;color:#333;"><span style="color:#1ea11e">解决方案:</span> 授权错误，请重新授权</div>
<div class="a" style="left:1430px;top:51.5px;width:7px;height:418px;border-radius:3.5px;background:rgba(0,0,0,0.5)"></div>
</body></html>
